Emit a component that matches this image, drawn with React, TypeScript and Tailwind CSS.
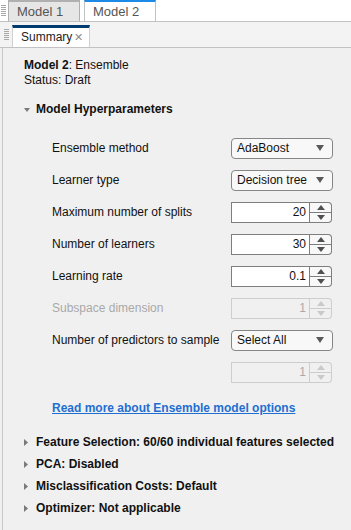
import React from 'react';

type Row =
  | { label: string; kind: 'select'; value: string; disabled?: boolean }
  | { label: string; kind: 'spin'; value: string; disabled?: boolean };

const rows: Row[] = [
  { label: 'Ensemble method', kind: 'select', value: 'AdaBoost' },
  { label: 'Learner type', kind: 'select', value: 'Decision tree' },
  { label: 'Maximum number of splits', kind: 'spin', value: '20' },
  { label: 'Number of learners', kind: 'spin', value: '30' },
  { label: 'Learning rate', kind: 'spin', value: '0.1' },
  { label: 'Subspace dimension', kind: 'spin', value: '1', disabled: true },
  { label: 'Number of predictors to sample', kind: 'select', value: 'Select All' },
  { label: '', kind: 'spin', value: '1', disabled: true },
];

const sections = [
  'Feature Selection: 60/60 individual features selected',
  'PCA: Disabled',
  'Misclassification Costs: Default',
  'Optimizer: Not applicable',
];

function Grip() {
  return (
    <svg width="7" height="12" viewBox="0 0 7 12" className="shrink-0">
      {[0, 2, 4, 6, 8, 10].map((y) => (
        <line key={y} x1="1" x2="6" y1={y + 0.5} y2={y + 0.5} stroke="#a8a8a8" strokeWidth="1" />
      ))}
    </svg>
  );
}

function Dropdown({ value }: { value: string }) {
  return (
    <div className="w-[102px] h-[21px] rounded-[4px] border border-[#868686] bg-[#f8f8f8] flex items-center justify-between pl-[5px] pr-[8px] text-[#111]">
      <span>{value}</span>
      <svg width="8" height="6" viewBox="0 0 8 6">
        <path d="M0 0 H8 L4 6 Z" fill="#5a5a5a" />
      </svg>
    </div>
  );
}

function Spinner({ value, disabled }: { value: string; disabled?: boolean }) {
  const border = disabled ? 'border-[#cdcdcd]' : 'border-[#7e7e7e]';
  const tri = disabled ? '#c9c9c9' : '#505050';
  return (
    <div className="w-[101px] h-[21px] flex">
      <div
        className={`flex-1 border ${border} ${disabled ? 'bg-[#f0f0f0] text-[#a9a9a9]' : 'bg-white text-[#111]'} flex items-center justify-end pr-[3px]`}
      >
        {value}
      </div>
      <div className={`w-[22px] border border-l-0 ${border} rounded-r-[4px] flex flex-col ${disabled ? 'bg-[#f0f0f0]' : 'bg-[#f8f8f8]'}`}>
        <div className={`flex-1 flex items-center justify-center border-b ${border}`}>
          <svg width="8" height="5" viewBox="0 0 8 5">
            <path d="M0 5 H8 L4 0 Z" fill={tri} />
          </svg>
        </div>
        <div className="flex-1 flex items-center justify-center">
          <svg width="8" height="5" viewBox="0 0 8 5">
            <path d="M0 0 H8 L4 5 Z" fill={tri} />
          </svg>
        </div>
      </div>
    </div>
  );
}

function Collapsed() {
  return (
    <svg width="4" height="7" viewBox="0 0 4 7" className="shrink-0">
      <path d="M0 0 L4 3.5 L0 7 Z" fill="#7a7a7a" />
    </svg>
  );
}

export default function App() {
  return (
    <div className="w-[351px] h-[530px] overflow-hidden bg-[#f0f0f0] font-['Liberation_Sans',Arial,sans-serif] text-[12px] leading-[15px] text-[#111]">
      {/* document tabs */}
      <div className="h-[22px] bg-white border-b border-[#c2c2c2] flex items-stretch">
        <div className="w-[8px] flex items-center justify-start">
          <Grip />
        </div>
        <div className="w-[72px] bg-[#e6e6e6] border-t-2 border-x border-[#b0b0b0] flex items-center pl-[8px] text-[#555] text-[13px]">
          Model 1
        </div>
        <div className="w-[4px]" />
        <div className="w-[72px] bg-white border-t-2 border-t-[#1c8ae6] border-x border-x-[#c2c2c2] flex items-center pl-[8px] text-[#555] text-[13px]">
          Model 2
        </div>
      </div>

      {/* panel tabs */}
      <div className="h-[26px] bg-[#f3f3f3] border-b border-[#c2c2c2] flex items-end">
        <div className="w-[12px] h-full flex items-center pl-[3px]">
          <Grip />
        </div>
        <div className="w-[78px] h-[22px] bg-white border-t-[3px] border-t-[#003b70] border-x border-x-[#d0d0d0] flex items-center pl-[8px] pr-[6px] justify-between">
          <span className="text-[#222]">Summary</span>
          <span className="text-[#8c8c8c] text-[11px] leading-none">✕</span>
        </div>
      </div>

      {/* content */}
      <div className="ml-[2px] border-l border-[#c8c8c8] h-full pl-[21px] pt-[10px]">
        <div>
          <span className="font-bold">Model 2</span>: Ensemble
        </div>
        <div>Status: Draft</div>

        <div className="mt-[14px] flex items-center gap-[6px] font-bold">
          <svg width="6" height="4" viewBox="0 0 6 4" className="shrink-0">
            <path d="M0 0 H6 L3 4 Z" fill="#7a7a7a" />
          </svg>
          Model Hyperparameters
        </div>

        <div className="mt-[15px] pl-[28px]">
          {rows.map((r, i) => (
            <div key={i} className="h-[32px] flex items-center">
              <div className={`w-[179px] ${r.disabled && r.label ? 'text-[#a9a9a9]' : ''}`}>{r.label}</div>
              {r.kind === 'select' ? <Dropdown value={r.value} /> : <Spinner value={r.value} disabled={r.disabled} />}
            </div>
          ))}
        </div>

        <div className="mt-[13px] pl-[28px]">
          <a className="font-bold text-[#1f6fd0] underline">Read more about Ensemble model options</a>
        </div>

        <div className="mt-[15px] flex flex-col">
          {sections.map((s) => (
            <div key={s} className="h-[22px] flex items-center gap-[8px] font-bold">
              <Collapsed />
              {s}
            </div>
          ))}
        </div>
      </div>
    </div>
  );
}
